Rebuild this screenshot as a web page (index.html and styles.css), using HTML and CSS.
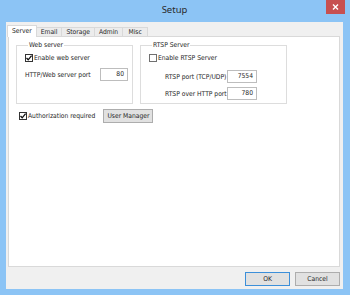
FILE: index.html
```html
<html>
<head>
  <title>Setup</title>
  <link rel="stylesheet" href="styles.css">
</head>
<body>

  <div class="window">
    <div class="titlebar">
      <span class="title">Setup</span>
      <span class="close">
        <svg width="7" height="6" viewBox="0 0 7 6"><path d="M1 0.5 L6 5.5 M6 0.5 L1 5.5" stroke="#fff" stroke-width="1.4"/></svg>
      </span>
    </div>

    <div class="client">
      <div class="tabs">
        <div class="tab active">Server</div>
        <div class="tab">Email</div>
        <div class="tab">Storage</div>
        <div class="tab">Admin</div>
        <div class="tab">Misc</div>
      </div>

      <div class="panel">
        <div class="groups">
          <fieldset class="group web">
            <legend>Web server</legend>
            <div class="check">
              <span class="box"><svg width="8" height="8" viewBox="0 0 8 8"><path d="M1.5 4 L3.2 5.8 L6.6 1.6" fill="none" stroke="#111" stroke-width="1.3"/></svg></span>
              Enable web server
            </div>
            <div class="field">
              <span class="label">HTTP/Web server port</span>
              <span class="input">80</span>
            </div>
          </fieldset>

          <fieldset class="group rtsp">
            <legend>RTSP Server</legend>
            <div class="check">
              <span class="box empty"></span>
              Enable RTSP Server
            </div>
            <div class="field first">
              <span class="label">RTSP port (TCP/UDP)</span>
              <span class="input">7554</span>
            </div>
            <div class="field">
              <span class="label">RTSP over HTTP port</span>
              <span class="input">780</span>
            </div>
          </fieldset>
        </div>

        <div class="auth">
          <div class="check">
            <span class="box"><svg width="8" height="8" viewBox="0 0 8 8"><path d="M1.5 4 L3.2 5.8 L6.6 1.6" fill="none" stroke="#111" stroke-width="1.3"/></svg></span>
            Authorization required
          </div>
          <span class="btn users">User Manager</span>
        </div>
      </div>

      <div class="footer">
        <span class="btn default">OK</span>
        <span class="btn">Cancel</span>
      </div>
    </div>
  </div>

</body>
</html>
```

FILE: styles.css
```css
* { box-sizing: border-box; }

body {
  margin: 0;
  background: #8cc4f5;
  font-family: "DejaVu Sans Condensed", "Liberation Sans", sans-serif;
  font-size: 6.7px;
  color: #1e1e1e;
}

.window {
  width: 350px;
  height: 295px;
  display: flex;
  flex-direction: column;
  padding: 0 7px 6px 6px;
}

/* caption bar */
.titlebar {
  height: 22px;
  display: grid;
  grid-template-columns: 1fr auto 1fr;
  align-items: start;
}

.title {
  grid-column: 2;
  font-family: "Noto Sans", "Liberation Sans", sans-serif;
  font-size: 9.5px;
  line-height: 20px;
  color: #2a2a2a;
}

.close {
  grid-column: 3;
  justify-self: end;
  width: 19px;
  height: 14px;
  margin-right: -2px;
  background: #c75050;
  display: flex;
  align-items: center;
  justify-content: center;
}

.client {
  flex: 1;
  background: #f0f0f0;
  display: flex;
  flex-direction: column;
  padding: 3px 3px 3px 2px;
}

/* tab strip */
.tabs {
  height: 11px;
  display: flex;
  align-items: flex-end;
  padding-left: 1px;
}

.tab {
  height: 9px;
  min-width: 26px;
  line-height: 8px;
  padding: 0 4px;
  text-align: center;
  border: 1px solid #d9d9d9;
  border-bottom: none;
  margin-left: -1px;
  background: #ececec;
}

.tab.active {
  position: relative;
  z-index: 1;
  height: 12px;
  line-height: 10px;
  margin-bottom: -1px;
  margin-left: -2px;
  padding: 0 4px;
  background: #fff;
}

.panel {
  flex: 1;
  background: #fff;
  border: 1px solid #d9d9d9;
  padding: 4px 6px 0 7px;
}

.groups {
  display: flex;
  gap: 7px;
}

.group {
  margin: 0;
  border: 1px solid #dddddd;
  padding: 4px 4px 3px 8px;
  min-width: 0;
}

.group legend {
  line-height: 8px;
  padding: 0 1px;
  margin-left: 3px;
}

.web { width: 117px; }
.rtsp { width: 147px; }

.check {
  height: 10px;
  display: flex;
  align-items: center;
  gap: 1px;
}

.box {
  width: 8px;
  height: 8px;
  border: 1px solid #333;
  background: #fff;
  display: flex;
  align-items: center;
  justify-content: center;
}

.box svg { flex: none; }

.box.empty { border-color: #707070; }

.field {
  height: 13px;
  margin-top: 5px;
  display: flex;
  align-items: center;
}

.web .label { width: 76px; }

.rtsp .field { padding-left: 16px; margin-top: 4px; }
.rtsp .field.first { margin-top: 7px; }
.rtsp .label { width: 62px; }

.input {
  width: 28px;
  height: 13px;
  border: 1px solid #bdbdbd;
  background: #fff;
  text-align: right;
  line-height: 11px;
  padding-right: 3px;
}

.rtsp .input { width: 30px; }

.auth {
  margin-top: 5px;
  padding-left: 3px;
  height: 14px;
  display: flex;
  align-items: center;
  gap: 8px;
}

.btn {
  height: 14px;
  border: 1px solid #adadad;
  background: #e1e1e1;
  line-height: 12px;
  text-align: center;
}

.users { width: 50px; }

.footer {
  margin-top: 5px;
  display: flex;
  justify-content: flex-end;
  gap: 5px;
}

.footer .btn { width: 45px; }

.btn.default { border-color: #3c8fd9; }
```
